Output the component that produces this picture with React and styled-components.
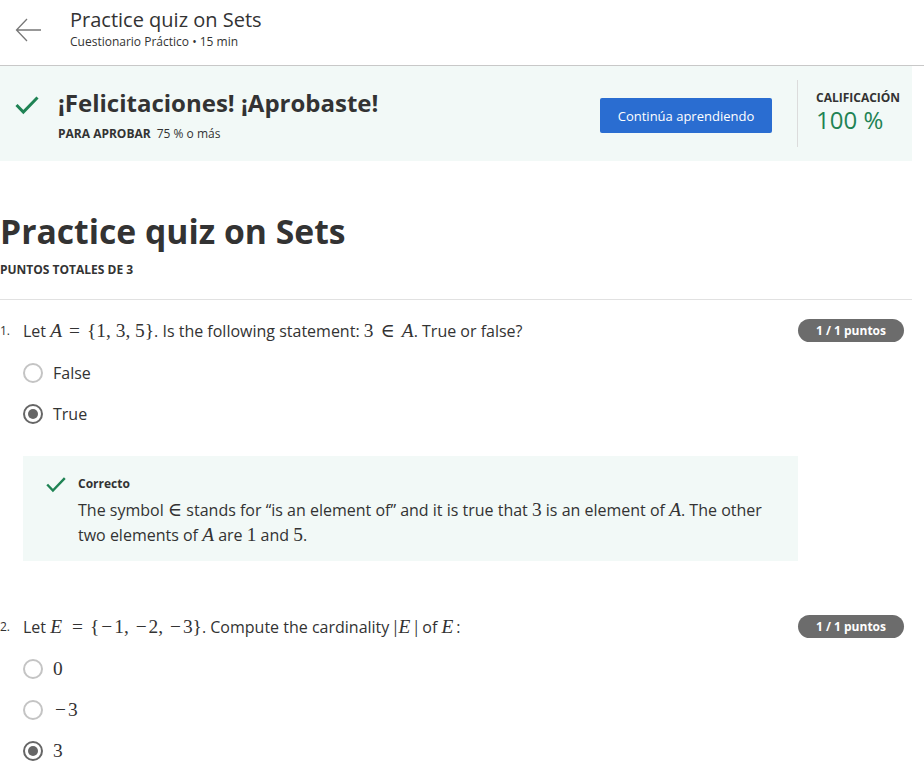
import React from "react";
import styled, { createGlobalStyle } from "styled-components";

const Global = createGlobalStyle`
  html, body { margin: 0; padding: 0; background: #fff; }
  body { font-family: "Open Sans", "Noto Sans", Arial, sans-serif; color: #333; }
`;

const Header = styled.header`
  height: 66px;
  border-bottom: 1px solid #c8c8c8;
  display: flex;
  align-items: flex-start;
  padding: 7px 0 0 15px;
  box-sizing: border-box;
`;

const BackBtn = styled.div`
  width: 28px;
  height: 24px;
  margin-top: 11px;
  margin-right: 27px;
  display: flex;
`;

const HeaderText = styled.div`
  display: flex;
  flex-direction: column;
`;

const HeaderTitle = styled.div`
  font-size: 20px;
  line-height: 26px;
  color: #333;
`;

const HeaderSub = styled.div`
  font-size: 12px;
  line-height: 18px;
  color: #333;
`;

const Banner = styled.section`
  width: 912px;
  height: 95px;
  background: #f2f9f7;
  display: flex;
  align-items: stretch;
  box-sizing: border-box;
`;

const BannerLeft = styled.div`
  flex: 1;
  display: flex;
  padding: 22px 0 0 14px;
`;

const CheckWrap = styled.div`
  width: ${(p) => p.w}px;
  height: ${(p) => p.h}px;
  margin-top: ${(p) => p.mt || 0}px;
  margin-right: ${(p) => p.mr}px;
  flex-shrink: 0;
`;

const BannerHeading = styled.div`
  font-size: 24px;
  font-weight: 700;
  line-height: 30px;
  color: #333;
`;

const PassLine = styled.div`
  margin-top: 8px;
  font-size: 12px;
  line-height: 16px;
  color: #333;
  & b { font-weight: 700; margin-right: 6px; }
`;

const Button = styled.button`
  align-self: flex-start;
  margin-top: 32px;
  width: 172px;
  height: 35px;
  border: none;
  border-radius: 2px;
  background: #2a6dd1;
  color: #fff;
  font-family: "Open Sans", sans-serif;
  font-size: 13px;
  font-weight: 500;
  padding: 0;
`;

const Divider = styled.div`
  width: 1px;
  background: #dcdcdc;
  margin: 14px 18px 14px 25px;
`;

const Grade = styled.div`
  width: 96px;
  padding-top: 23px;
`;

const GradeLabel = styled.div`
  font-size: 12px;
  font-weight: 700;
  line-height: 18px;
  color: #333;
`;

const GradeValue = styled.div`
  font-size: 24px;
  line-height: 26px;
  color: #1f8354;
`;

const Main = styled.main`
  width: 912px;
`;

const QuizTitle = styled.h1`
  margin: 48px 0 0;
  font-size: 33.7px;
  font-weight: 700;
  line-height: 44px;
  color: #333;
`;

const TotalPoints = styled.div`
  margin-top: 9px;
  font-size: 12px;
  font-weight: 700;
  line-height: 16px;
  color: #333;
`;

const Rule = styled.hr`
  margin: 21px 0 0;
  border: none;
  border-top: 1px solid #e1e1e1;
`;

const Question = styled.div`
  padding-top: ${(p) => p.pt}px;
`;

const QRow = styled.div`
  display: flex;
  align-items: center;
  height: 23px;
  margin-bottom: 10px;
`;

const QNum = styled.span`
  width: 23px;
  font-size: 12px;
  color: #333;
  flex-shrink: 0;
`;

const QText = styled.div`
  flex: 1;
  font-size: 16px;
  color: #333;
  white-space: nowrap;
`;

const Badge = styled.span`
  width: 106px;
  height: 23px;
  border-radius: 12px;
  background: #6c6c6c;
  color: #fff;
  font-size: 12px;
  font-weight: 700;
  display: flex;
  align-items: center;
  justify-content: center;
  margin-right: 8px;
`;

const Option = styled.div`
  height: 41px;
  display: flex;
  align-items: center;
  padding-left: 23px;
`;

const Radio = styled.span`
  width: 20px;
  height: 20px;
  box-sizing: border-box;
  border-radius: 50%;
  border: 2px solid ${(p) => (p.checked ? "#666" : "#c4c4c4")};
  display: flex;
  align-items: center;
  justify-content: center;
  margin-right: 10px;
  background: #fff;
  &::after {
    content: "";
    display: ${(p) => (p.checked ? "block" : "none")};
    width: 10px;
    height: 10px;
    border-radius: 50%;
    background: #666;
  }
`;

const OptionLabel = styled.span`
  font-size: 16px;
  color: #333;
`;

const Feedback = styled.div`
  margin: 22px 0 0 23px;
  width: 775px;
  height: 105px;
  box-sizing: border-box;
  background: #f2f9f7;
  display: flex;
  padding: 19px 20px 0 22px;
`;

const FeedbackBody = styled.div`
  flex: 1;
`;

const FeedbackTitle = styled.div`
  font-size: 12px;
  font-weight: 700;
  line-height: 18px;
  color: #333;
`;

const FeedbackText = styled.div`
  margin-top: 5px;
  font-size: 16px;
  line-height: 25px;
  color: #333;
`;

const M = styled.span`
  font-family: "Liberation Serif", "DejaVu Serif", serif;
  font-size: 19.4px;
  line-height: 1;
  font-style: ${(p) => (p.i ? "italic" : "normal")};
  padding: 0 ${(p) => p.pr || 0}px 0 ${(p) => p.pl || 0}px;
`;

const Minus = styled.span`
  padding: 0 2px;
`;

const Check = ({ w, h, mt, mr, sw }) => (
  <CheckWrap w={w} h={h} mt={mt} mr={mr}>
    <svg width={w} height={h} viewBox={`0 0 ${w} ${h}`}>
      <polyline
        points={`${sw / 2 + 1},${h * 0.5} ${w * 0.36},${h - sw} ${w - sw / 2 - 1},${sw / 2 + 1}`}
        fill="none"
        stroke="#1f8354"
        strokeWidth={sw}
      />
    </svg>
  </CheckWrap>
);

const Arrow = () => (
  <BackBtn>
    <svg width="28" height="24" viewBox="0 0 28 24">
      <path d="M26 12H2M12 1L1.5 12L12 23" fill="none" stroke="#777" strokeWidth="1.3" />
    </svg>
  </BackBtn>
);

export default function App() {
  return (
    <>
      <Global />
      <Header>
        <Arrow />
        <HeaderText>
          <HeaderTitle>Practice quiz on Sets</HeaderTitle>
          <HeaderSub>Cuestionario Práctico • 15 min</HeaderSub>
        </HeaderText>
      </Header>
      <Banner>
        <BannerLeft>
          <Check w={26} h={20} mt={7} mr={18} sw={3} />
          <div>
            <BannerHeading>¡Felicitaciones! ¡Aprobaste!</BannerHeading>
            <PassLine>
              <b>PARA APROBAR</b>75 % o más
            </PassLine>
          </div>
        </BannerLeft>
        <Button>Continúa aprendiendo</Button>
        <Divider />
        <Grade>
          <GradeLabel>CALIFICACIÓN</GradeLabel>
          <GradeValue>100 %</GradeValue>
        </Grade>
      </Banner>
      <Main>
        <QuizTitle>Practice quiz on Sets</QuizTitle>
        <TotalPoints>PUNTOS TOTALES DE 3</TotalPoints>
        <Rule />
        <Question pt={19}>
          <QRow>
            <QNum>1.</QNum>
            <QText>
              Let <M i>A</M>
              <M pl={7} pr={7}>=</M>
              <M>{"{1, 3, 5}"}</M>. Is the following statement: <M>3</M>
              <M pl={7} pr={7}>∈</M>
              <M i>A</M>. True or false?
            </QText>
            <Badge>1 / 1 puntos</Badge>
          </QRow>
          <Option>
            <Radio />
            <OptionLabel>False</OptionLabel>
          </Option>
          <Option>
            <Radio checked />
            <OptionLabel>True</OptionLabel>
          </Option>
          <Feedback>
            <Check w={22} h={17} mt={1} mr={11} sw={2.4} />
            <FeedbackBody>
              <FeedbackTitle>Correcto</FeedbackTitle>
              <FeedbackText>
                The symbol <M>∈</M> stands for “is an element of” and it is true that <M>3</M> is an
                element of <M i>A</M>. The other two elements of <M i>A</M> are <M>1</M> and <M>5</M>.
              </FeedbackText>
            </FeedbackBody>
          </Feedback>
        </Question>
        <Question pt={54}>
          <QRow>
            <QNum>2.</QNum>
            <QText>
              Let <M i pr={3}>E</M>
              <M pl={7} pr={7}>=</M>
              <M>
                {"{"}
                <Minus>−</Minus>1, <Minus>−</Minus>2, <Minus>−</Minus>3{"}"}
              </M>
              . Compute the cardinality <M pr={1}>|</M>
              <M i pr={3}>E</M>
              <M pl={1}>|</M> of <M i pr={3}>E</M>:
            </QText>
            <Badge>1 / 1 puntos</Badge>
          </QRow>
          <Option>
            <Radio />
            <OptionLabel>
              <M>0</M>
            </OptionLabel>
          </Option>
          <Option>
            <Radio />
            <OptionLabel>
              <M>
                <Minus>−</Minus>3
              </M>
            </OptionLabel>
          </Option>
          <Option>
            <Radio checked />
            <OptionLabel>
              <M>3</M>
            </OptionLabel>
          </Option>
        </Question>
      </Main>
    </>
  );
}
